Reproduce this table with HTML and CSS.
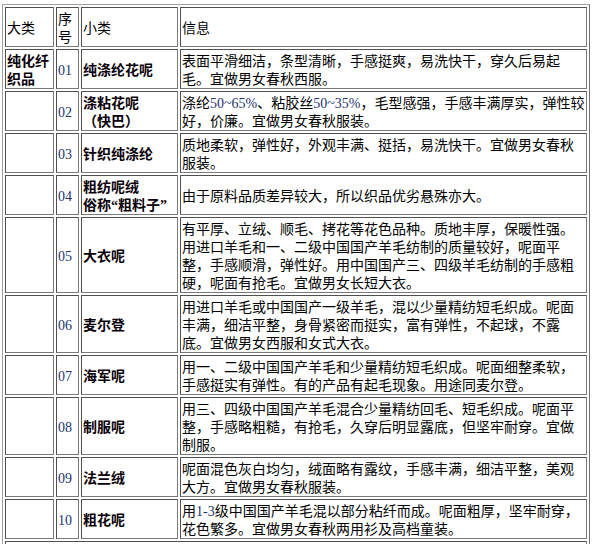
FILE: index.html
```html
<!DOCTYPE html>
<html lang="zh-CN">
<head>
<meta charset="utf-8">
<title>纯化纤织品</title>
<link rel="stylesheet" href="styles.css">
</head>
<body>
<table class="fabric">
  <tr>
    <td class="c1">大类</td>
    <td class="c2">序号</td>
    <td class="c3">小类</td>
    <td class="c4">信息</td>
  </tr>
  <tr>
    <td class="b">纯化纤织品</td>
    <td><span class="num">01</span></td>
    <td class="b">纯涤纶花呢</td>
    <td>表面平滑细洁，条型清晰，手感挺爽，易洗快干，穿久后易起毛。宜做男女春秋西服。</td>
  </tr>
  <tr>
    <td></td>
    <td><span class="num">02</span></td>
    <td class="b">涤粘花呢<br>（快巴）</td>
    <td>涤纶<span class="num">50~65%</span>、粘胶丝<span class="num">50~35%</span>，毛型感强，手感丰满厚实，弹性较好，价廉。宜做男女春秋服装。</td>
  </tr>
  <tr>
    <td></td>
    <td><span class="num">03</span></td>
    <td class="b">针织纯涤纶</td>
    <td>质地柔软，弹性好，外观丰满、挺括，易洗快干。宜做男女春秋服装。</td>
  </tr>
  <tr>
    <td></td>
    <td><span class="num">04</span></td>
    <td class="b">粗纺呢绒<br>俗称<span class="q">“</span>粗料子<span class="q">”</span></td>
    <td>由于原料品质差异较大，所以织品优劣悬殊亦大。</td>
  </tr>
  <tr>
    <td></td>
    <td><span class="num">05</span></td>
    <td class="b">大衣呢</td>
    <td>有平厚、立绒、顺毛、拷花等花色品种。质地丰厚，保暖性强。用进口羊毛和一、二级中国国产羊毛纺制的质量较好，呢面平整，手感顺滑，弹性好。用中国国产三、四级羊毛纺制的手感粗硬，呢面有抢毛。宜做男女长短大衣。</td>
  </tr>
  <tr>
    <td></td>
    <td><span class="num">06</span></td>
    <td class="b">麦尔登</td>
    <td>用进口羊毛或中国国产一级羊毛，混以少量精纺短毛织成。呢面丰满，细洁平整，身骨紧密而挺实，富有弹性，不起球，不露底。宜做男女西服和女式大衣。</td>
  </tr>
  <tr>
    <td></td>
    <td><span class="num">07</span></td>
    <td class="b">海军呢</td>
    <td>用一、二级中国国产羊毛和少量精纺短毛织成。呢面细整柔软，手感挺实有弹性。有的产品有起毛现象。用途同麦尔登。</td>
  </tr>
  <tr>
    <td></td>
    <td><span class="num">08</span></td>
    <td class="b">制服呢</td>
    <td>用三、四级中国国产羊毛混合少量精纺回毛、短毛织成。呢面平整，手感略粗糙，有抢毛，久穿后明显露底，但坚牢耐穿。宜做制服。</td>
  </tr>
  <tr>
    <td></td>
    <td><span class="num">09</span></td>
    <td class="b">法兰绒</td>
    <td>呢面混色灰白均匀，绒面略有露纹，手感丰满，细洁平整，美观大方。宜做男女春秋服装。</td>
  </tr>
  <tr>
    <td></td>
    <td><span class="num">10</span></td>
    <td class="b">粗花呢</td>
    <td>用<span class="num">1-3</span>级中国国产羊毛混以部分粘纤而成。呢面粗厚，坚牢耐穿，花色繁多。宜做男女春秋两用衫及高档童装。</td>
  </tr>
  <tr>
    <td colspan="4">&nbsp;</td>
  </tr>
</table>
</body>
</html>
```

FILE: styles.css
```css
html, body {
  margin: 0;
  padding: 0;
  background: #ffffff;
}

body {
  font-family: "Noto Sans CJK SC", "Liberation Sans", sans-serif;
  font-size: 14px;
  line-height: 18px;
  color: #000000;
}

.fabric {
  box-sizing: border-box;
  width: 588px;
  margin: 4px 0 0 2px;
  table-layout: fixed;
  border-collapse: separate;
  border-spacing: 2px;
  border: 1px solid;
  border-color: #a0a0a0 #707070 #707070 #a0a0a0;
}

.fabric td {
  box-sizing: border-box;
  padding: 1px;
  vertical-align: middle;
  text-align: left;
  border: 1px solid;
  border-color: #505050 #7a7a7a #7a7a7a #505050;
  word-break: normal;
}

.c1 { width: 49px; }
.c2 { width: 23px; }
.c3 { width: 97px; }
.c4 { width: 407px; }

.b {
  font-weight: bold;
  color: #0a0008;
}

.num {
  font-family: "Liberation Serif", serif;
  line-height: 14px;
  color: #24336e;
}

.q {
  font-family: "Liberation Serif", serif;
  line-height: 14px;
}
```
